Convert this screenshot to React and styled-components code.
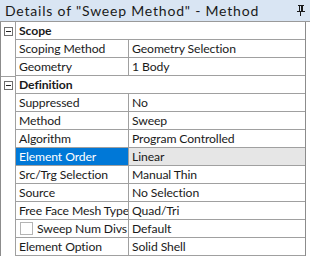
import React from 'react';
import styled, { createGlobalStyle } from 'styled-components';

const GlobalStyle = createGlobalStyle`
  body {
    margin: 0;
    background: #ffffff;
    font-family: Lato, "Noto Sans", sans-serif;
  }
`;

const Panel = styled.div`
  width: 310px;
  height: 259px;
  background: #ffffff;
`;

const TitleBar = styled.div`
  height: 22px;
  display: flex;
  align-items: center;
  justify-content: space-between;
  padding: 0 5px 0 5px;
  box-sizing: border-box;
  background: #d9e5f3;
  border-bottom: 1px solid #9a9a9a;
  font-size: 14px;
  letter-spacing: 0.8px;
  color: #1a1a1a;
`;

const Grid = styled.div`
  width: 306px;
  box-sizing: border-box;
  border-left: 1px solid #8c8c8c;
  border-right: 1px solid #8c8c8c;
`;

const Row = styled.div`
  display: grid;
  grid-template-columns: 15px 113px 1fr;
  height: 18px;
`;

const Gutter = styled.div`
  border-right: 1px solid #a0a0a0;
  border-top: ${p => (p.$top ? '1px solid #a0a0a0' : 'none')};
  display: flex;
  align-items: center;
  justify-content: center;
  box-sizing: border-box;
`;

const Cell = styled.div`
  display: flex;
  align-items: center;
  gap: 4px;
  padding-left: 3px;
  box-sizing: border-box;
  border-bottom: 1px solid #a0a0a0;
  border-right: ${p => (p.$divider ? '1px solid #a0a0a0' : 'none')};
  grid-column: ${p => (p.$span ? '2 / 4' : 'auto')};
  font-size: 12.2px;
  letter-spacing: -0.1px;
  font-weight: ${p => (p.$bold ? 700 : 400)};
  white-space: nowrap;
  overflow: hidden;
  background: ${p => p.$bg || 'transparent'};
  color: ${p => p.$fg || '#1a1a1a'};
`;

const Toggle = styled.div`
  width: 7px;
  height: 7px;
  border: 1px solid #6e6e6e;
  position: relative;
  background: #fff;
  &::after {
    content: '';
    position: absolute;
    left: 1px;
    right: 1px;
    top: 3px;
    height: 1px;
    background: #222;
  }
`;

const CheckBox = styled.span`
  display: inline-block;
  flex: none;
  width: 11px;
  height: 11px;
  border: 1px solid #b4b4b4;
  background: #fff;
  margin-left: 1px;
`;

const PinIcon = () => (
  <svg width="8" height="11" viewBox="0 0 8 11" fill="#1a1a1a">
    <rect x="1" y="0" width="6" height="1" />
    <rect x="2" y="1" width="1" height="5" />
    <rect x="4" y="1" width="2" height="5" />
    <rect x="0" y="6" width="8" height="1" />
    <rect x="3" y="7" width="1" height="4" />
  </svg>
);

const sections = [
  {
    title: 'Scope',
    rows: [
      ['Scoping Method', 'Geometry Selection'],
      ['Geometry', '1 Body'],
    ],
  },
  {
    title: 'Definition',
    rows: [
      ['Suppressed', 'No'],
      ['Method', 'Sweep'],
      ['Algorithm', 'Program Controlled'],
      ['Element Order', 'Linear', 'selected'],
      ['Src/Trg Selection', 'Manual Thin'],
      ['Source', 'No Selection'],
      ['Free Face Mesh Type', 'Quad/Tri'],
      ['Sweep Num Divs', 'Default', 'check'],
      ['Element Option', 'Solid Shell'],
    ],
  },
];

export default function App() {
  return (
    <Panel>
      <GlobalStyle />
      <TitleBar>
        <span>Details of "Sweep Method" - Method</span>
        <PinIcon />
      </TitleBar>
      <Grid>
        {sections.map((s, si) => (
          <React.Fragment key={s.title}>
            <Row>
              <Gutter $top={si > 0}>
                <Toggle />
              </Gutter>
              <Cell $span $bold>{s.title}</Cell>
            </Row>
            {s.rows.map(([name, value, kind]) => (
              <Row key={name}>
                <Gutter />
                <Cell
                  $divider
                  $bg={kind === 'selected' ? '#0078d7' : undefined}
                  $fg={kind === 'selected' ? '#ffffff' : undefined}
                >
                  {kind === 'check' && <CheckBox />}
                  {name}
                </Cell>
                <Cell $bg={kind === 'selected' ? '#e6e6e6' : undefined}>{value}</Cell>
              </Row>
            ))}
          </React.Fragment>
        ))}
      </Grid>
    </Panel>
  );
}
